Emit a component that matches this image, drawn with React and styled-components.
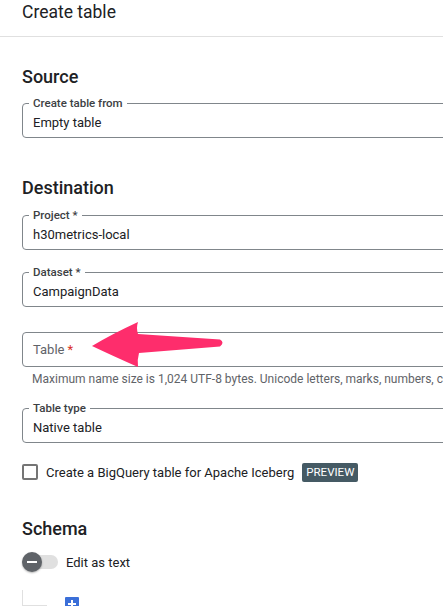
import React from 'react'
import styled, { createGlobalStyle } from 'styled-components'

const GlobalStyle = createGlobalStyle`
  html, body {
    margin: 0;
    padding: 0;
    background: #ffffff;
  }
  body {
    font-family: Roboto, "Liberation Sans", Arial, sans-serif;
    color: #202124;
    overflow: hidden;
  }
  *, *::before, *::after {
    box-sizing: border-box;
  }
`

const Page = styled.div`
  position: relative;
  width: 443px;
  height: 606px;
  overflow: hidden;
`

const Header = styled.header`
  height: 37px;
  padding: 1px 22px 0;
  border-bottom: 1px solid #e0e0e0;
  font-size: 17.5px;
  line-height: 22px;
  color: #202124;
`

const Body = styled.main`
  padding: 0 0 0 22px;
  width: 520px;
`

const SectionTitle = styled.h2`
  margin: ${(p) => p.$top}px 0 0;
  font-size: 18px;
  font-weight: 500;
  line-height: 24px;
  color: #202124;
`

const Field = styled.div`
  position: relative;
  margin-top: ${(p) => p.$top}px;
  height: 35px;
  padding: ${(p) => (p.$placeholder ? 0 : 3)}px 10px 0;
  display: flex;
  align-items: center;
  border: 1px solid #80868b;
  border-radius: 4px;
  font-size: 13px;
  line-height: 17px;
  color: ${(p) => (p.$placeholder ? '#5f6368' : '#202124')};
`

const FieldLabel = styled.span`
  position: absolute;
  top: -8px;
  left: 6px;
  padding: 0 4px;
  background: #ffffff;
  font-size: 11.5px;
  font-weight: 500;
  line-height: 14px;
  color: #3c4043;
`

const Required = styled.span`
  color: #d93025;
  margin-left: 3px;
`

const Hint = styled.div`
  margin-top: 5px;
  padding-left: 10px;
  font-size: 12px;
  line-height: 14px;
  color: #5f6368;
  white-space: nowrap;
`

const CheckRow = styled.label`
  margin-top: 19px;
  height: 20px;
  display: flex;
  align-items: center;
  font-size: 13px;
  color: #202124;
`

const Box = styled.span`
  width: 16px;
  height: 16px;
  border: 2px solid #757575;
  border-radius: 2px;
  margin-right: 8px;
`

const Badge = styled.span`
  margin-left: 8px;
  height: 19px;
  padding: 0 4px;
  display: inline-flex;
  align-items: center;
  background: #455a64;
  color: #ffffff;
  border-radius: 2px;
  font-size: 11.5px;
`

const ToggleRow = styled.div`
  margin-top: 11px;
  height: 20px;
  display: flex;
  align-items: center;
  font-size: 13px;
`

const Toggle = styled.span`
  position: relative;
  width: 36px;
  height: 20px;
  margin-right: 8px;
  display: flex;
  align-items: center;
`

const Track = styled.span`
  margin-left: 6px;
  width: 30px;
  height: 14px;
  border-radius: 7px;
  background: #e0e0e0;
`

const Thumb = styled.span`
  position: absolute;
  left: 0;
  top: 0;
  width: 20px;
  height: 20px;
  border-radius: 50%;
  background: #5f6368;
  box-shadow: 0 1px 2px rgba(0, 0, 0, 0.3);
  display: flex;
  align-items: center;
  justify-content: center;

  &::after {
    content: '';
    width: 10px;
    height: 2px;
    background: #ffffff;
  }
`

const SchemaRow = styled.div`
  margin-top: 18px;
  display: flex;
  align-items: flex-start;
`

const Corner = styled.span`
  width: 25px;
  height: 16px;
  border-left: 1px solid #e0e0e0;
  border-bottom: 1px solid #e0e0e0;
`

const AddButton = styled.span`
  margin: 7px 0 0 18px;
  width: 14px;
  height: 14px;
  border-radius: 1px;
  background: #3b6fd8;
  color: #ffffff;
  display: flex;
  align-items: center;
  justify-content: center;
`

const Arrow = styled.svg`
  position: absolute;
  left: 0;
  top: 0;
  pointer-events: none;
`

export default function App() {
  return (
    <Page>
      <GlobalStyle />
      <Header>Create table</Header>
      <Body>
        <SectionTitle $top={28}>Source</SectionTitle>
        <Field $top={14}>
          <FieldLabel>Create table from</FieldLabel>
          Empty table
        </Field>

        <SectionTitle $top={38}>Destination</SectionTitle>
        <Field $top={15}>
          <FieldLabel>Project *</FieldLabel>
          h30metrics-local
        </Field>
        <Field $top={22}>
          <FieldLabel>Dataset *</FieldLabel>
          CampaignData
        </Field>
        <Field $top={25} $placeholder>
          Table<Required>*</Required>
        </Field>
        <Hint>
          Maximum name size is 1,024 UTF-8 bytes. Unicode letters, marks, numbers, connectors, dashes or spaces allowed.
        </Hint>
        <Field $top={22}>
          <FieldLabel>Table type</FieldLabel>
          Native table
        </Field>
        <CheckRow>
          <Box />
          Create a BigQuery table for Apache Iceberg
          <Badge>PREVIEW</Badge>
        </CheckRow>

        <SectionTitle $top={35}>Schema</SectionTitle>
        <ToggleRow>
          <Toggle>
            <Track />
            <Thumb />
          </Toggle>
          Edit as text
        </ToggleRow>
        <SchemaRow>
          <Corner />
          <AddButton>
            <svg width="10" height="10" viewBox="0 0 10 10">
              <path d="M5 1v8M1 5h8" stroke="#fff" strokeWidth="2" />
            </svg>
          </AddButton>
        </SchemaRow>
      </Body>

      <Arrow width="443" height="606" viewBox="0 0 443 606">
        <path
          d="M92 346 Q112 334 138 322 Q136 328 138 334 L220 339.5 Q225 342.5 220 346.5 L139 353 Q137 360 138 367 Q113 356 92 346 Z"
          fill="#fe2d6c"
        />
      </Arrow>
    </Page>
  )
}
